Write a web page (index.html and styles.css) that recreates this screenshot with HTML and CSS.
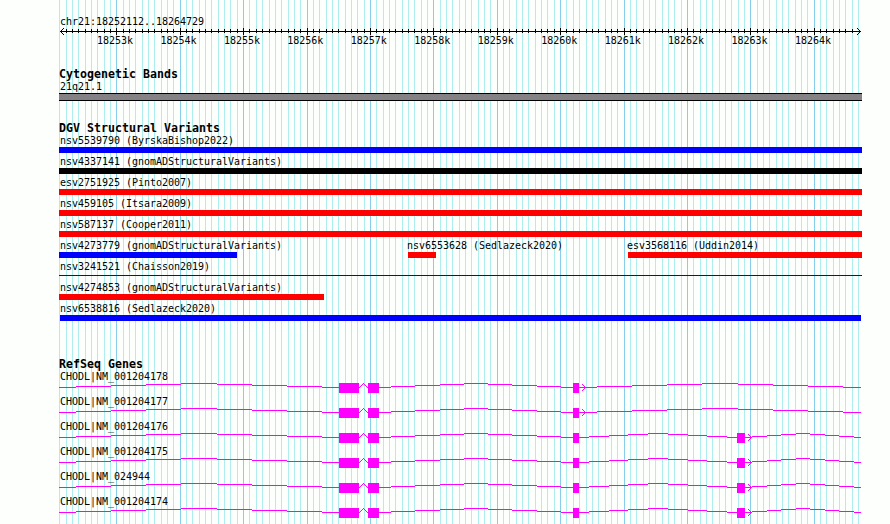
FILE: index.html
```
<!DOCTYPE html>
<html lang="en">
<head>
  <meta charset="utf-8">
  <title>chr21:18252112..18264729</title>
  <link rel="stylesheet" href="styles.css">
</head>
<body>
  <div class="browser">
    <svg class="grid" id="grid" width="890" height="524"></svg>

    <div class="ruler">
      <div class="region">chr21:18252112..18264729</div>
      <svg class="axis" id="axis" width="890" height="7"></svg>
      <div class="positions">
        <span>18253k</span><span>18254k</span><span>18255k</span><span>18256k</span>
        <span>18257k</span><span>18258k</span><span>18259k</span><span>18260k</span>
        <span>18261k</span><span>18262k</span><span>18263k</span><span>18264k</span>
      </div>
    </div>

    <div class="track cyto">
      <h2>Cytogenetic Bands</h2>
      <div class="label">21q21.1</div>
      <div class="band"></div>
    </div>

    <div class="track variants">
      <h2>DGV Structural Variants</h2>
      <div class="row"><div class="label">nsv5539790 (ByrskaBishop2022)</div><div class="bar blue"></div></div>
      <div class="row"><div class="label">nsv4337141 (gnomADStructuralVariants)</div><div class="bar black"></div></div>
      <div class="row"><div class="label">esv2751925 (Pinto2007)</div><div class="bar red"></div></div>
      <div class="row"><div class="label">nsv459105 (Itsara2009)</div><div class="bar red"></div></div>
      <div class="row"><div class="label">nsv587137 (Cooper2011)</div><div class="bar red"></div></div>
      <div class="row split">
        <div><div class="label">nsv4273779 (gnomADStructuralVariants)</div><div class="bar blue w-4273779"></div></div>
        <div><div class="label">nsv6553628 (Sedlazeck2020)</div><div class="bar red w-6553628"></div></div>
        <div><div class="label">esv3568116 (Uddin2014)</div><div class="bar red"></div></div>
      </div>
      <div class="row"><div class="label">nsv3241521 (Chaisson2019)</div><div class="bar thin"></div></div>
      <div class="row"><div class="label">nsv4274853 (gnomADStructuralVariants)</div><div class="bar red w-4274853"></div></div>
      <div class="row"><div class="label">nsv6538816 (Sedlazeck2020)</div><div class="bar blue inset"></div></div>
    </div>

    <div class="track genes">
      <h2>RefSeq Genes</h2>
      <div class="gene"><div class="label">CHODL|NM_001204178</div><svg data-gene="short" width="803" height="11"></svg></div>
      <div class="gene"><div class="label">CHODL|NM_001204177</div><svg data-gene="short" width="803" height="11"></svg></div>
      <div class="gene"><div class="label">CHODL|NM_001204176</div><svg data-gene="long" width="803" height="11"></svg></div>
      <div class="gene"><div class="label">CHODL|NM_001204175</div><svg data-gene="long" width="803" height="11"></svg></div>
      <div class="gene"><div class="label">CHODL|NM_024944</div><svg data-gene="long" width="803" height="11"></svg></div>
      <div class="gene"><div class="label">CHODL|NM_001204174</div><svg data-gene="long" width="803" height="11"></svg></div>
    </div>
  </div>
  <script src="script.js"></script>
</body>
</html>
```
FILE: styles.css
```
body {
  margin: 0;
  background-color: #fcfffc;
  color: #000;
  font-family: "DejaVu Sans Mono", monospace;
  font-size: 10px;
  line-height: 12px;
  letter-spacing: -0.02px;
}
.browser {
  position: relative;
  height: 524px;
  overflow: hidden;
}
.grid {
  position: absolute;
  top: 0;
  left: 0;
  z-index: -1;
}
svg {
  display: block;
  shape-rendering: crispEdges;
}
.minor {
  fill: #afeeee;
}
.major {
  fill: #87ceeb;
}

/* ruler */
.ruler {
  padding-top: 15px;
  height: 53px;
}
.region {
  padding-left: 60px;
  height: 13px;
  line-height: 14px;
}
.axis path {
  stroke: #000;
  fill: none;
}
.positions {
  display: flex;
  justify-content: space-between;
  width: 734px;
  margin-left: 97px;
}

/* tracks */
.track {
  width: 803px;
  margin-left: 59px;
}
h2 {
  margin: 0;
  font-size: 11.6px;
  line-height: 12px;
  letter-spacing: 0.017px;
}
.label {
  height: 12px;
  line-height: 14px;
  padding-left: 1px;
  white-space: nowrap;
}
.cyto {
  height: 54px;
}
.band {
  box-sizing: border-box;
  height: 8px;
  margin-top: 1px;
  border: solid #000;
  border-width: 1px 0;
  background-color: #848284;
}
.variants {
  height: 236px;
}
.row {
  height: 21px;
}
.split {
  display: grid;
  grid-template-columns: 349px 220px 234px;
}
.split > div + div .label {
  padding-left: 0;
  margin-left: -1px;
}
.bar {
  height: 6px;
  margin-top: 1px;
}
.blue {
  background-color: #0000ff;
}
.red {
  background-color: #ff0000;
}
.black {
  background-color: #000;
}
.thin {
  height: 1px;
  margin-top: 3px;
  background-color: #0000ff;
}
.inset {
  margin-left: 1px;
  margin-right: 1px;
}
.w-4273779 {
  width: 178px;
}
.w-6553628 {
  width: 28px;
}
.w-4274853 {
  width: 265px;
}

/* genes */
.gene {
  height: 25px;
}
.gene .label {
  height: 13px;
}
.gene path {
  stroke: #ff00ff;
  fill: none;
}
.gene rect {
  fill: #ff00ff;
}
```
FILE: script.js
```
// one grid line every 100 bp
const step = 6.34;
const firstLine = 59.29;
let grid = '';
let axis = 'M60 3.5H861';

// arrow heads at both ends of the axis
for (let i = 1; i < 4; i++) {
  axis += `M${60 + i} ${3.5 - i}h1M${60 + i} ${3.5 + i}h1`;
  axis += `M${860 - i} ${3.5 - i}h1M${860 - i} ${3.5 + i}h1`;
}

for (let i = 0; i <= 126; i++) {
  const x = Math.round(firstLine + i * step);
  const major = i % 10 === 9;
  grid += `<rect class="${major ? 'major' : 'minor'}" x="${x}" y="0" width="1" height="524"/>`;
  if (x > 60 && x < 858) {
    axis += major ? `M${x + 0.5} 0v7` : `M${x + 0.5} 1v4`;
  }
}
document.getElementById('grid').innerHTML = grid;
document.getElementById('axis').innerHTML = `<path d="${axis}"/>`;

// exons as [start, width], introns as [start, end], relative to the track
const genes = {
  short: {
    exons: [[280, 20], [309, 11], [514, 6]],
    introns: [[0, 280], [300, 309], [320, 514], [520, 802]],
    arrow: 527
  },
  long: {
    exons: [[280, 20], [309, 11], [514, 6], [678, 8]],
    introns: [[0, 280], [300, 309], [320, 514], [520, 678], [686, 802]],
    arrow: 693
  }
};

// introns are hats 4px high, drawn in whole pixel steps
function intron(start, end) {
  const mid = (start + end) / 2;
  let d = '';
  let from = start;
  let last = null;
  for (let x = start; x <= end; x++) {
    const y = x === end ? null : 4 - Math.round(4 * (1 - Math.abs(x + 0.5 - mid) / (mid - start)));
    if (y !== last) {
      if (last !== null) d += `M${from} ${4.5 - (4 - last)}H${x}`;
      from = x;
      last = y;
    }
  }
  return d;
}

document.querySelectorAll('svg[data-gene]').forEach(svg => {
  const gene = genes[svg.dataset.gene];
  const a = gene.arrow;
  let d = gene.introns.map(([s, e]) => intron(s, e)).join('');
  d += `M${a - 7} 4.5H${a}`;
  for (let i = 0; i < 4; i++) {
    d += `M${a - 1 - i} ${4.5 - i}h1M${a - 1 - i} ${4.5 + i}h1`;
  }
  svg.innerHTML = `<path d="${d}"/>` +
    gene.exons.map(([x, w]) => `<rect x="${x}" y="0" width="${w}" height="10"/>`).join('');
});
```
